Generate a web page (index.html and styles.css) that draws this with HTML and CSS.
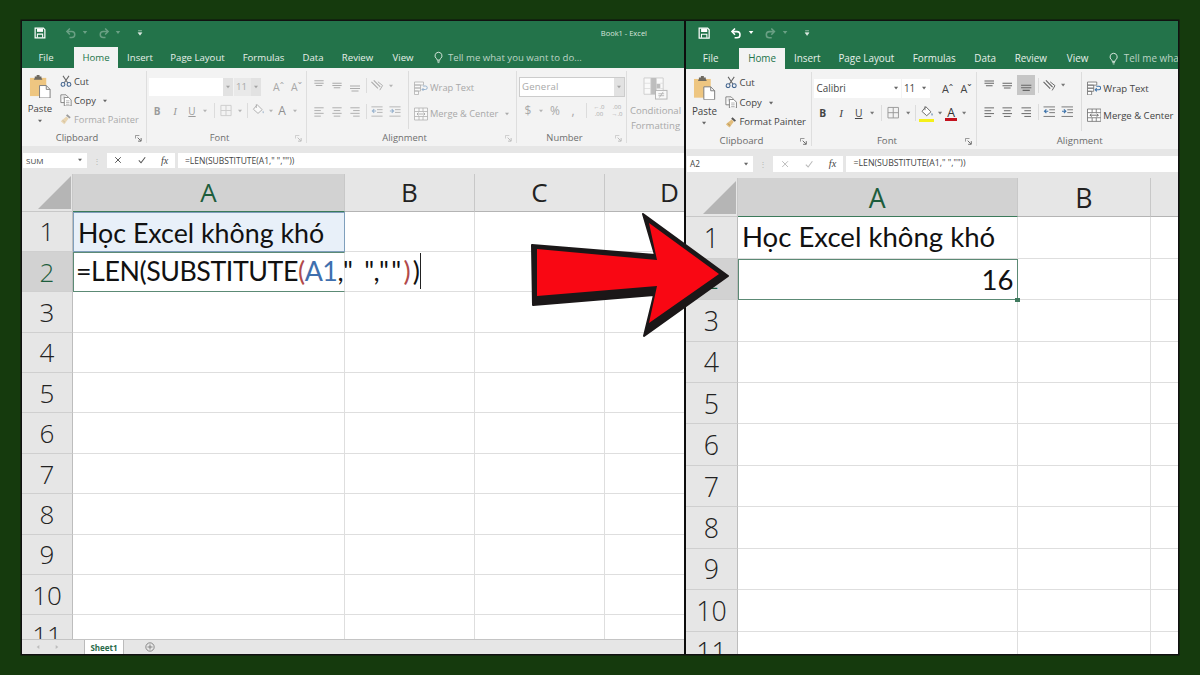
FILE: index.html
```html
<!DOCTYPE html>
<html lang="vi">
<head>
<meta charset="utf-8">
<title>Excel LEN SUBSTITUTE</title>
<link rel="stylesheet" href="styles.css">
</head>
<body>
<svg class="sprite" aria-hidden="true">
  <symbol id="save" viewBox="0 0 16 16"><path d="M1.5 1.5h11l2 2v11h-13z" fill="none" stroke="currentColor" stroke-width="1.6"/><path d="M4 2v4.5h8V2z" fill="currentColor"/><path d="M4.5 14V9.5h7V14" fill="none" stroke="currentColor" stroke-width="1.4"/></symbol>
  <symbol id="undo" viewBox="0 0 16 16"><path d="M6.5 2 2.5 6l4 4" fill="none" stroke="currentColor" stroke-width="2"/><path d="M3 6h6a4 4 0 0 1 0 8H6" fill="none" stroke="currentColor" stroke-width="2"/></symbol>
  <symbol id="redo" viewBox="0 0 16 16"><path d="M9.500 2l4 4-4 4" fill="none" stroke="currentColor" stroke-width="2"/><path d="M13 6H7a4 4 0 0 0 0 8h3" fill="none" stroke="currentColor" stroke-width="2"/></symbol>
  <symbol id="caret" viewBox="0 0 8 6"><path d="M1 1h6L4 5z" fill="currentColor"/></symbol>
  <symbol id="qat" viewBox="0 0 8 8"><path d="M1.500 1h5M1.500 3.500h5L4 7z" fill="currentColor" stroke="currentColor" stroke-width=".8"/></symbol>
  <symbol id="paste" viewBox="0 0 24 24"><rect x="1" y="3" width="17" height="19" fill="#eec681"/><path d="M6 3V1.500h2V0h3v1.500h2V3l1 2H5z" fill="#6f6a60"/><path d="M11 11h7l4 4v9H11z" fill="#fff" stroke="#7d7d7d"/><path d="M18 11v4h4" fill="none" stroke="#7d7d7d"/></symbol>
  <symbol id="cut" viewBox="0 0 14 14"><path d="M3.500 1 9 9M10.500 1 5 9" fill="none" stroke="#666" stroke-width="1.200"/><circle cx="3.500" cy="11" r="2.200" fill="none" stroke="#41648f" stroke-width="1.200"/><circle cx="10.500" cy="11" r="2.200" fill="none" stroke="#41648f" stroke-width="1.200"/></symbol>
  <symbol id="copy" viewBox="0 0 14 14"><path d="M1 1h6l2 2v7H1z" fill="#fff" stroke="#777"/><path d="M5 4h5l3 3v7H5z" fill="#fff" stroke="#777"/><path d="M3 3.500h3M3 5.500h1M7 8h4M7 10h4M7 12h4" stroke="#888" stroke-width=".7"/></symbol>
  <symbol id="brush" viewBox="0 0 14 14"><path d="M8.500 1.500 12.500 5 11 6.500 7 3z" fill="#555"/><path d="M7.500 4 10 6.500 5 13 1 9.500z" fill="#e2bd7c"/><path d="M3 8.500 6 11" stroke="#a78c58"/></symbol>
  <symbol id="launch" viewBox="0 0 8 8"><path d="M.5 4V.5H5" fill="none" stroke="#8a8a8a"/><path d="M3 3l3.500 3.500M7 3.500V7H3.500" fill="none" stroke="#5d5d5d"/></symbol>
  <symbol id="borders" viewBox="0 0 14 14"><path d="M1.500 1.500h11v11h-11zM7 1.500v11M1.500 7h11" fill="none" stroke="currentColor"/></symbol>
  <symbol id="fill" viewBox="0 0 18 18"><path d="M8 2 14 8 9 12.500 3.500 7.500z" fill="#fff" stroke="#666" stroke-width="1.100"/><path d="M7 1.500V6" stroke="#666"/><path d="M15 9c1.300 1.800 1.500 3 .4 3.300-1 .2-1.400-1.200-.4-3.300z" fill="#6a8fb5"/></symbol>
  <symbol id="altop" viewBox="0 0 14 14"><path d="M2 2h10M2 4.500h10M3.500 7h7" stroke="currentColor" stroke-width="1.100"/></symbol>
  <symbol id="almid" viewBox="0 0 14 14"><path d="M2 4.500h10M2 7h10M3.500 9.500h7" stroke="currentColor" stroke-width="1.100"/></symbol>
  <symbol id="albot" viewBox="0 0 14 14"><path d="M2 7h10M2 9.500h10M3.500 12h7" stroke="currentColor" stroke-width="1.100"/></symbol>
  <symbol id="alleft" viewBox="0 0 14 14"><path d="M2 3h10M2 6h7M2 9h10M2 12h7" stroke="currentColor"/></symbol>
  <symbol id="alcen" viewBox="0 0 14 14"><path d="M2 3h10M3.500 6h7M2 9h10M3.500 12h7" stroke="currentColor"/></symbol>
  <symbol id="alright" viewBox="0 0 14 14"><path d="M2 3h10M5 6h7M2 9h10M5 12h7" stroke="currentColor"/></symbol>
  <symbol id="orient" viewBox="0 0 16 14"><path d="M2 3 9 10M4.500 1.500 11.500 8.500" stroke="currentColor" stroke-width="1.200" fill="none"/><path d="M9 3l5 4-3 5" fill="none" stroke="currentColor"/></symbol>
  <symbol id="indl" viewBox="0 0 14 14"><path d="M1 2h12M7 5h6M7 8h6M1 12h12" stroke="#777"/><path d="M6 6.500H2M4 4.500l-2 2 2 2" fill="none" stroke="#3f74ab" stroke-width="1.200"/></symbol>
  <symbol id="indr" viewBox="0 0 14 14"><path d="M1 2h12M7 5h6M7 8h6M1 12h12" stroke="#777"/><path d="M1.500 6.500h4M3.500 4.500l2 2-2 2" fill="none" stroke="#3f74ab" stroke-width="1.200"/></symbol>
  <symbol id="wrap" viewBox="0 0 14 14"><path d="M.5 1h9v3h-9zM.5 4h6v3h-6zM.5 7h6v3h-6zM.5 10h4v3.500h-4z" fill="#fff" stroke="#707070" stroke-width=".8"/><path d="M9 5h2.500a1.500 1.500 0 0 1 0 3.500H8M9.500 7 8 8.500 9.500 10" fill="none" stroke="#3f74ab"/></symbol>
  <symbol id="merge" viewBox="0 0 14 14"><path d="M.5 1h13v12H.5zM.5 4.500h13M.5 9.500h13M5 1v3.500M9 1v3.500M5 9.500V13M9 9.500V13" fill="#fff" stroke="#707070" stroke-width=".8"/><path d="M3 7h8M4.500 5.500 3 7l1.500 1.500M9.500 5.500 11 7 9.500 8.500" fill="none" stroke="#555" stroke-width=".8"/></symbol>
  <symbol id="cf" viewBox="0 0 26 24"><path d="M1 1h20v17H1z" fill="#fff" stroke="#aaa"/><path d="M8 1h6v6h4v5h-4v6H8z" fill="#8a8a8a"/><path d="M8 6.500H1M8 12H1M21 6.500h-3M21 12h-3M14 1v17M8 1v17" stroke="#bbb" stroke-width=".7"/><rect x="13" y="14" width="12" height="9" fill="#fff" stroke="#777"/><path d="M16 17.500h6M16 19.500h6M21 15.500l-4 6" stroke="#666" stroke-width=".8"/></symbol>
  <symbol id="bulb" viewBox="0 0 12 16"><path d="M6 1a4.700 4.700 0 0 0-2.700 8.500c.6.5.7 1.200.8 2h3.800c.1-.8.2-1.500.8-2A4.700 4.700 0 0 0 6 1z" fill="none" stroke="currentColor" stroke-width="1.200"/><path d="M4.300 13h3.400M4.800 14.800h2.400" stroke="currentColor"/></symbol>
  <symbol id="x" viewBox="0 0 10 10"><path d="M1.500 1.500l7 7M8.500 1.500l-7 7" stroke="currentColor" stroke-width="1.200"/></symbol>
  <symbol id="chk" viewBox="0 0 10 10"><path d="M1 5.500 3.800 8.500 9 1.500" fill="none" stroke="currentColor" stroke-width="1.300"/></symbol>
  <symbol id="plus" viewBox="0 0 12 12"><circle cx="6" cy="6" r="5" fill="none" stroke="#777"/><path d="M3 6h6M6 3v6" stroke="#777"/></symbol>
  <symbol id="navl" viewBox="0 0 6 8"><path d="M5 1 1 4l4 3z" fill="#bdbdbd"/></symbol>
  <symbol id="navr" viewBox="0 0 6 8"><path d="M1 1l4 3-4 3z" fill="#bdbdbd"/></symbol>
</svg>

<main class="frame">
  <!-- LEFT WINDOW -->
  <section class="pane pane-left">
    <div class="title">
      <svg class="qa qa-save"><use href="#save"/></svg>
      <svg class="qa qa-undo dim"><use href="#undo"/></svg>
      <svg class="qa-c dim"><use href="#caret"/></svg>
      <svg class="qa qa-redo dim"><use href="#redo"/></svg>
      <svg class="qa-c dim"><use href="#caret"/></svg>
      <svg class="qa-q"><use href="#qat"/></svg>
      <span class="book">Book1 - Excel</span>
    </div>
    <nav class="tabs">
      <span class="tab t-file">File</span><span class="tab t-home">Home</span><span class="tab t-ins">Insert</span><span class="tab t-pl">Page Layout</span><span class="tab t-for">Formulas</span><span class="tab t-dat">Data</span><span class="tab t-rev">Review</span><span class="tab t-vie">View</span>
      <svg class="bulb"><use href="#bulb"/></svg><span class="tell">Tell me what you want to do...</span>
    </nav>
    <div class="ribbon">
      <div class="g g-clip">
        <div class="g-body clip-body">
          <div class="paste"><svg class="paste-i"><use href="#paste"/></svg><span>Paste</span><svg class="car"><use href="#caret"/></svg></div>
          <div class="clip-list">
            <div class="cl"><svg class="cl-i"><use href="#cut"/></svg><span>Cut</span></div>
            <div class="cl"><svg class="cl-i"><use href="#copy"/></svg><span>Copy</span><svg class="car car-l"><use href="#caret"/></svg></div>
            <div class="cl faded"><svg class="cl-i"><use href="#brush"/></svg><span>Format Painter</span></div>
          </div>
        </div>
        <div class="g-label"><span>Clipboard</span><svg class="launch"><use href="#launch"/></svg></div>
      </div>
      <div class="g g-font off">
        <div class="g-body col">
          <div class="r r1">
            <div class="combo c-name"><span></span><i class="drop"><svg class="car"><use href="#caret"/></svg></i></div>
            <div class="combo c-size"><span>11</span><i class="drop"><svg class="car"><use href="#caret"/></svg></i></div>
            <span class="grow">Aˆ</span><span class="shrink">Aˇ</span>
          </div>
          <div class="r r2">
            <b class="ib w18 sm">B</b><i class="ib w18 sm serif">I</i><u class="ib w16 sm">U</u><svg class="cr w10"><use href="#caret"/></svg><s class="sp w8"></s><svg class="ic w16"><use href="#borders"/></svg><svg class="cr w12"><use href="#caret"/></svg><s class="sp w2"></s><svg class="ic w20 fillic"><use href="#fill"/></svg><svg class="cr w6"><use href="#caret"/></svg><span class="ib w16 fontc">A</span><svg class="cr w10"><use href="#caret"/></svg>
          </div>
        </div>
        <div class="g-label"><span>Font</span><svg class="launch"><use href="#launch"/></svg></div>
      </div>
      <div class="g g-align off">
        <div class="g-body al-body">
          <div class="al-left">
            <div class="r r1b">
              <svg class="ic w18 al"><use href="#altop"/></svg><svg class="ic w18 al"><use href="#almid"/></svg><span class="ib w18"><svg class="ic14 al"><use href="#albot"/></svg></span><s class="sp w4"></s><svg class="ic w18 al"><use href="#orient"/></svg><svg class="cr w10"><use href="#caret"/></svg>
            </div>
            <div class="r r2b">
              <svg class="ic w18 al"><use href="#alleft"/></svg><svg class="ic w18 al"><use href="#alcen"/></svg><svg class="ic w18 al"><use href="#alright"/></svg><s class="sp w4"></s><svg class="ic w18"><use href="#indl"/></svg><svg class="ic w18"><use href="#indr"/></svg>
            </div>
          </div>
          <div class="al-right">
            <div class="cl cl-w"><svg class="cl-i"><use href="#wrap"/></svg><span>Wrap Text</span></div>
            <div class="cl cl-w"><svg class="cl-i"><use href="#merge"/></svg><span>Merge &amp; Center</span><svg class="car car-l"><use href="#caret"/></svg></div>
          </div>
        </div>
        <div class="g-label"><span>Alignment</span><svg class="launch"><use href="#launch"/></svg></div>
      </div>
      <div class="g g-num off">
        <div class="g-body col">
          <div class="r r1"><div class="combo c-gen"><span>General</span><i class="drop"><svg class="car"><use href="#caret"/></svg></i></div></div>
          <div class="r r2 r2n">
            <span class="ib w16 big">$</span><svg class="cr w10"><use href="#caret"/></svg><span class="ib w18 big">%</span><span class="ib w18 big">,</span><s class="sp w8"></s><span class="dec"><em>←.0</em><em>.00</em></span><span class="dec"><em>.00</em><em>→.0</em></span>
          </div>
        </div>
        <div class="g-label"><span>Number</span><svg class="launch"><use href="#launch"/></svg></div>
      </div>
      <div class="g g-cf off">
        <svg class="cf-i"><use href="#cf"/></svg>
        <span class="cf-t">Conditional</span>
        <span class="cf-t">Formatting</span>
      </div>
    </div>
    <div class="fbar">
      <div class="namebox"><span>SUM</span><svg class="car"><use href="#caret"/></svg></div>
      <span class="vdots">⋮</span>
      <div class="fx"><svg class="fxi"><use href="#x"/></svg><svg class="fxi"><use href="#chk"/></svg><i>fx</i></div>
      <div class="finput">=LEN(SUBSTITUTE(A1," ",""))</div>
    </div>
    <div class="sheet">
      <div class="row head"><div class="corner"><b></b></div><div class="ch a on">A</div><div class="ch b">B</div><div class="ch b">C</div><div class="ch b">D</div></div>
      <div class="row"><div class="rh">1</div><div class="c a sel1">Học Excel không khó</div><div class="c b"></div><div class="c b"></div><div class="c b"></div></div>
      <div class="row"><div class="rh on">2</div><div class="c a edit"><span class="etext">=LEN(SUBSTITUTE<span class="red">(</span><span class="blue">A1</span><span class="q">," ",""</span><span class="red q">)</span>)</span></div><div class="c b"></div><div class="c b"></div><div class="c b"></div></div>
      <div class="row"><div class="rh">3</div><div class="c a"></div><div class="c b"></div><div class="c b"></div><div class="c b"></div></div>
      <div class="row"><div class="rh">4</div><div class="c a"></div><div class="c b"></div><div class="c b"></div><div class="c b"></div></div>
      <div class="row"><div class="rh">5</div><div class="c a"></div><div class="c b"></div><div class="c b"></div><div class="c b"></div></div>
      <div class="row"><div class="rh">6</div><div class="c a"></div><div class="c b"></div><div class="c b"></div><div class="c b"></div></div>
      <div class="row"><div class="rh">7</div><div class="c a"></div><div class="c b"></div><div class="c b"></div><div class="c b"></div></div>
      <div class="row"><div class="rh">8</div><div class="c a"></div><div class="c b"></div><div class="c b"></div><div class="c b"></div></div>
      <div class="row"><div class="rh">9</div><div class="c a"></div><div class="c b"></div><div class="c b"></div><div class="c b"></div></div>
      <div class="row"><div class="rh">10</div><div class="c a"></div><div class="c b"></div><div class="c b"></div><div class="c b"></div></div>
      <div class="row"><div class="rh">11</div><div class="c a"></div><div class="c b"></div><div class="c b"></div><div class="c b"></div></div>
    </div>
    <div class="sheetbar">
      <svg class="nav"><use href="#navl"/></svg><svg class="nav"><use href="#navr"/></svg>
      <span class="stab">Sheet1</span>
      <svg class="addsheet"><use href="#plus"/></svg>
    </div>
  </section>

  <!-- RIGHT WINDOW -->
  <section class="pane pane-right">
    <div class="title">
      <svg class="qa qa-save"><use href="#save"/></svg>
      <svg class="qa qa-undo"><use href="#undo"/></svg>
      <svg class="qa-c"><use href="#caret"/></svg>
      <svg class="qa qa-redo dim"><use href="#redo"/></svg>
      <svg class="qa-c dim"><use href="#caret"/></svg>
      <svg class="qa-q"><use href="#qat"/></svg>
    </div>
    <nav class="tabs">
      <span class="tab t-file">File</span><span class="tab t-home">Home</span><span class="tab t-ins">Insert</span><span class="tab t-pl">Page Layout</span><span class="tab t-for">Formulas</span><span class="tab t-dat">Data</span><span class="tab t-rev">Review</span><span class="tab t-vie">View</span>
      <svg class="bulb"><use href="#bulb"/></svg><span class="tell">Tell me what you want to do...</span>
    </nav>
    <div class="ribbon">
      <div class="g g-clip">
        <div class="g-body clip-body">
          <div class="paste"><svg class="paste-i"><use href="#paste"/></svg><span>Paste</span><svg class="car"><use href="#caret"/></svg></div>
          <div class="clip-list">
            <div class="cl"><svg class="cl-i"><use href="#cut"/></svg><span>Cut</span></div>
            <div class="cl"><svg class="cl-i"><use href="#copy"/></svg><span>Copy</span><svg class="car car-l"><use href="#caret"/></svg></div>
            <div class="cl"><svg class="cl-i"><use href="#brush"/></svg><span>Format Painter</span></div>
          </div>
        </div>
        <div class="g-label"><span>Clipboard</span><svg class="launch"><use href="#launch"/></svg></div>
      </div>
      <div class="g g-font">
        <div class="g-body col">
          <div class="r r1">
            <div class="combo c-name"><span>Calibri</span><i class="drop"><svg class="car"><use href="#caret"/></svg></i></div>
            <div class="combo c-size"><span>11</span><i class="drop"><svg class="car"><use href="#caret"/></svg></i></div>
            <span class="grow">Aˆ</span><span class="shrink">Aˇ</span>
          </div>
          <div class="r r2">
            <b class="ib w18 sm">B</b><i class="ib w18 sm serif">I</i><u class="ib w16 sm">U</u><svg class="cr w10"><use href="#caret"/></svg><s class="sp w8"></s><svg class="ic w16 bord"><use href="#borders"/></svg><svg class="cr w12"><use href="#caret"/></svg><s class="sp w2"></s><span class="ib w20 fillwrap"><svg class="fill14"><use href="#fill"/></svg></span><svg class="cr w6"><use href="#caret"/></svg><span class="ib w16 fontc red-u">A</span><svg class="cr w10"><use href="#caret"/></svg>
          </div>
        </div>
        <div class="g-label"><span>Font</span><svg class="launch"><use href="#launch"/></svg></div>
      </div>
      <div class="g g-align">
        <div class="g-body al-body">
          <div class="al-left">
            <div class="r r1b">
              <svg class="ic w18 al"><use href="#altop"/></svg><svg class="ic w18 al"><use href="#almid"/></svg><span class="ib w18 pressed"><svg class="ic14 al"><use href="#albot"/></svg></span><s class="sp w4"></s><svg class="ic w18 al"><use href="#orient"/></svg><svg class="cr w10"><use href="#caret"/></svg>
            </div>
            <div class="r r2b">
              <svg class="ic w18 al"><use href="#alleft"/></svg><svg class="ic w18 al"><use href="#alcen"/></svg><svg class="ic w18 al"><use href="#alright"/></svg><s class="sp w4"></s><svg class="ic w18"><use href="#indl"/></svg><svg class="ic w18"><use href="#indr"/></svg>
            </div>
          </div>
          <div class="al-right">
            <div class="cl cl-w"><svg class="cl-i"><use href="#wrap"/></svg><span>Wrap Text</span></div>
            <div class="cl cl-w"><svg class="cl-i"><use href="#merge"/></svg><span>Merge &amp; Center</span></div>
          </div>
        </div>
        <div class="g-label"><span>Alignment</span></div>
      </div>
    </div>
    <div class="fbar">
      <div class="namebox"><span>A2</span><svg class="car"><use href="#caret"/></svg></div>
      <span class="vdots">⋮</span>
      <div class="fx"><svg class="fxi pale"><use href="#x"/></svg><svg class="fxi pale"><use href="#chk"/></svg><i>fx</i></div>
      <div class="finput">=LEN(SUBSTITUTE(A1," ",""))</div>
    </div>
    <div class="sheet">
      <div class="row head"><div class="corner"><b></b></div><div class="ch a on">A</div><div class="ch b">B</div><div class="ch b"></div></div>
      <div class="row"><div class="rh">1</div><div class="c a">Học Excel không khó</div><div class="c b"></div><div class="c b"></div></div>
      <div class="row"><div class="rh on">2</div><div class="c a active">16</div><div class="c b"></div><div class="c b"></div></div>
      <div class="row"><div class="rh">3</div><div class="c a"></div><div class="c b"></div><div class="c b"></div></div>
      <div class="row"><div class="rh">4</div><div class="c a"></div><div class="c b"></div><div class="c b"></div></div>
      <div class="row"><div class="rh">5</div><div class="c a"></div><div class="c b"></div><div class="c b"></div></div>
      <div class="row"><div class="rh">6</div><div class="c a"></div><div class="c b"></div><div class="c b"></div></div>
      <div class="row"><div class="rh">7</div><div class="c a"></div><div class="c b"></div><div class="c b"></div></div>
      <div class="row"><div class="rh">8</div><div class="c a"></div><div class="c b"></div><div class="c b"></div></div>
      <div class="row"><div class="rh">9</div><div class="c a"></div><div class="c b"></div><div class="c b"></div></div>
      <div class="row"><div class="rh">10</div><div class="c a"></div><div class="c b"></div><div class="c b"></div></div>
      <div class="row"><div class="rh">11</div><div class="c a"></div><div class="c b"></div><div class="c b"></div></div>
    </div>
  </section>
</main>

<svg class="arrow" viewBox="0 0 210 135" aria-hidden="true">
  <polygon points="2,34 125,44 113,3 198,65 114,125 124,84 3,94" fill="#1b1718" stroke="#1b1718" stroke-width="2" stroke-linejoin="round"/>
  <polygon points="7,38 127,49 119,12 189,63 119,112 127,75 7,85" fill="#f90713"/>
</svg>
</body>
</html>
```
FILE: styles.css
```css
* { box-sizing: border-box; }
html, body { margin: 0; height: 100%; }
body {
  background: #153a0d;
  padding: 20px 0 0 21px;
  font-family: "Open Sans", "Noto Sans", sans-serif;
  overflow: hidden;
  position: relative;
}
.sprite { position: absolute; width: 0; height: 0; }
svg { display: block; flex: none; }

.frame {
  width: 1158px;
  height: 635px;
  border: 1px solid #111;
  box-shadow: 0 0 0 .5px #111;
  display: flex;
  background: #fff;
}
.pane {
  display: flex;
  flex-direction: column;
  overflow: hidden;
  min-width: 0;
  color: #444;
}
.pane-left { width: 662px; flex: none; }
.pane-right {
  flex: 1;
  border-left: 2px solid #0d0d0d;
  zoom: 1.028;
}

/* title + tabs */
.title {
  height: 26px;
  flex: none;
  background: #23734a;
  color: #fff;
  display: flex;
  align-items: center;
  padding: 0 0 3px 12px;
}
.qa { width: 12px; height: 12px; color: #fff; }
.qa-undo { margin-left: 19px; }
.qa-redo { margin-left: 10px; }
.qa-c { width: 6px; height: 5px; margin-left: 5px; color: #fff; }
.dim { opacity: .32; }
.qa-q { width: 6px; height: 6px; margin-left: 16px; color: #dce9e1; }
.book {
  font-size: 7.5px;
  color: #d8e5dd;
  margin-left: auto;
  margin-right: 37px;
}
.tabs {
  height: 20.5px;
  flex: none;
  background: #23734a;
  display: flex;
  align-items: center;
  font-size: 9.6px;
  color: #e6efe9;
  white-space: nowrap;
}
.tab { height: 100%; flex: none; display: flex; align-items: center; justify-content: center; }
.t-file { width: 52px; padding-right: 4px; }
.t-home { width: 44px; background: #f3f3f3; color: #22734a; }
.t-ins { width: 44px; }
.t-pl { width: 71px; }
.t-for { width: 61px; }
.t-dat { width: 38px; }
.t-rev { width: 51px; }
.t-vie { width: 40px; margin-right: 11px; }
.bulb { width: 9px; height: 13px; color: #e6efe9; }
.tell { margin-left: 5px; color: #bcd3c5; }

/* ribbon */
.ribbon {
  height: 78px;
  flex: none;
  background: #f3f3f3;
  display: flex;
  white-space: nowrap;
  font-size: 9.6px;
  overflow: hidden;
}
.g {
  display: flex;
  flex-direction: column;
  flex: none;
  position: relative;
  padding-top: 3px;
}
.g::after {
  content: "";
  position: absolute;
  right: 0; top: 3px; bottom: 3px;
  width: 1px;
  background: #dedede;
}
.g-body { height: 60px; flex: none; }
.g-label {
  flex: none;
  display: flex;
  align-items: center;
  height: 14px;
  color: #6a6a6a;
  font-size: 9.4px;
}
.g-label span { flex: 1; text-align: center; }
.launch { width: 7px; height: 7px; margin: 2px 5px 0 3px; }
.g-clip { width: 125px; }
.g-font { width: 160px; }
.g-align { width: 210px; }
.g-num { width: 110px; }
.g-cf { width: 57px; align-items: center; padding-top: 9px; overflow: hidden; }
.g-cf::after { display: none; }

.clip-body { display: flex; }
.paste {
  width: 35px;
  display: flex;
  flex-direction: column;
  align-items: center;
  padding-left: 1px;
  padding-top: 4px;
  color: #444;
}
.paste-i { width: 23px; height: 23px; margin-bottom: 5px; }
.paste span { line-height: 12px; }
.car { width: 6px; height: 4px; color: #666; margin-top: 4px; }
.car-l { margin: 1px 0 0 6px; }
.clip-list { padding: 1px 0 0 3px; display: flex; flex-direction: column; }
.cl { height: 19px; display: flex; align-items: center; font-size: 9.3px; }
.cl-i { width: 12px; height: 12px; margin-right: 2px; }
.faded { color: #a9a9a9; }
.faded .cl-i { opacity: .55; }
.cl-w { height: 26px; }
.cl-w .cl-i { width: 14px; height: 14px; margin-right: 2px; }

.col { display: flex; flex-direction: column; padding-left: 2px; }
.r { display: flex; align-items: center; }
.r1 { height: 18px; margin-top: 7px; }
.r2 { height: 18px; margin-top: 6px; margin-left: -2px; padding-left: 1px; }
.combo { display: flex; height: 18px; background: #fff; align-items: center; font-size: 9.6px; }
.combo span { flex: 1; padding-left: 2px; }
.drop { width: 10px; height: 100%; display: flex; align-items: center; justify-content: center; }
.drop .car { margin: 0; }
.c-name { width: 84px; }
.c-size { width: 27px; margin-left: 1px; }
.grow { margin-left: 12px; width: 18px; font-size: 10.5px; }
.shrink { width: 16px; font-size: 10.5px; }
.ib { display: flex; align-items: center; justify-content: center; height: 18px; flex: none; }
.sm { font-size: 10px; }
.serif { font-family: "Liberation Serif", serif; font-size: 11px; }
.big { font-size: 12px; }
.w2 { width: 2px; } .w4 { width: 4px; } .w6 { width: 6px; } .w8 { width: 8px; } .w10 { width: 10px; }
.w12 { width: 12px; } .w16 { width: 16px; } .w18 { width: 18px; } .w20 { width: 20px; }
.cr { height: 4px; color: #777; }
.ic { height: 13px; }
.ic14 { width: 14px; height: 14px; }
.fillic { height: 15px; }
.fill14 { width: 15px; height: 15px; }
.sp { height: 15px; position: relative; display: block; flex: none; }
.sp::after { content: ""; position: absolute; left: 50%; top: 0; bottom: 0; width: 1px; background: #dcdcdc; }
.fontc { font-size: 12px; }

.red-u { position: relative; color: #333; }
.red-u::after { content: ""; position: absolute; left: 2px; right: 2px; bottom: 1px; height: 3px; background: #c3121e; }
.fillwrap { position: relative; }
.fillwrap::after { content: ""; position: absolute; left: 3px; right: 3px; bottom: 0; height: 3px; background: #f5f019; }
.bord { color: #999; }

.al-body { display: flex; }
.al-left { width: 102px; border-right: 1px solid #dcdcdc; height: 58px; padding: 5px 0 0 3px; }
.r1b { height: 20px; color: #777; }
.r2b { height: 20px; margin-top: 6px; }
.al { color: #666; }
.pressed { background: #c6c6c6; height: 19px; width: 18px; }
.al-right { padding: 4px 0 0 5px; }

.c-gen { width: 104px; margin-left: 1px; box-shadow: 0 0 0 1px #ccc; }
.c-gen .drop { background: #dedede; }
.c-gen span { letter-spacing: .2px; }
.r2n { padding-left: 3px; }
.dec { display: flex; flex-direction: column; width: 18px; align-items: center; font-size: 6px; line-height: 6.5px; }
.dec em { font-style: normal; }

.cf-i { width: 25px; height: 23px; margin-bottom: 3px; }
.cf-t { line-height: 15px; font-size: 9.6px; }

/* disabled left ribbon */
.off { color: #a8a8a8; }
.off .g-label { color: #6f6f6f; }
.off .g-label .launch { opacity: .4; }
.off .ic, .off .cl-i, .off .cr, .off .car, .off .cf-i, .off .ic14, .off .fillic { opacity: .5; }
.off .combo .drop { background: #e2e2e2; }
.off .c-size { background: #e9e9e9; }
.off .r2 b, .off .r2 i, .off .r2 u { color: #9b9b9b; }
.off .fontc { color: #8f8f8f; }

/* formula bar */
.fbar {
  height: 28px;
  flex: none;
  background: #e6e6e6;
  display: flex;
  align-items: flex-start;
  padding: 7px 0 0 1px;
  font-size: 8px;
}
.namebox {
  width: 64px; height: 15px; background: #fff;
  display: flex; align-items: center; justify-content: space-between;
  padding: 0 4px 0 3px;
}
.namebox .car { margin: 0; }
.vdots { width: 20px; text-align: center; color: #b5b5b5; line-height: 15px; }
.fx {
  width: 68px; height: 15px; background: #fff;
  display: flex; align-items: center; gap: 16px; padding-left: 7px;
  font-family: "Liberation Serif", serif; font-size: 10px;
}
.fx i { margin-left: -1px; }
.fxi { width: 8px; height: 8px; color: #555; }
.fxi.pale { color: #bbb; }
.finput {
  flex: 1; height: 15px; margin-left: 3px; background: #fff;
  padding-left: 7px; line-height: 15px; color: #444; font-size: 8.5px;
  font-family: "Open Sans", sans-serif; white-space: nowrap;
}

/* sheet */
.sheet { flex: 1; min-height: 0; overflow: hidden; background: #fff; }
.row { display: flex; height: 40.4px; }
.head { height: 38px; background: #e6e6e6; }
.corner { width: 51px; flex: none; border-right: 1px solid #c8c8c8; border-bottom: 1px solid #c8c8c8; display: flex; justify-content: flex-end; align-items: flex-end; padding: 0 1px 2px 0; }
.corner b { display: block; width: 0; height: 0; border-style: solid; border-width: 0 0 33px 33px; border-color: transparent transparent #b5b5b5 transparent; }
.ch {
  flex: none; display: flex; align-items: center; justify-content: center;
  font-size: 26px; font-weight: 400; color: #222;
  border-right: 1px solid #c8c8c8; border-bottom: 1px solid #b4b4b4;
}
.ch.on { background: #d2d2d2; color: #1d5d3c; border-bottom: 1px solid #3b7a5a; }
.a { width: 272px; flex: none; }
.b { width: 130px; flex: none; }
.rh {
  width: 51px; flex: none; background: #e6e6e6; color: #222;
  font-size: 26px; display: flex; align-items: center; justify-content: center;
  border-right: 1px solid #bdbdbd; border-bottom: 1px solid #cfcfcf;
  font-weight: 300;
}
.rh.on { background: #d2d2d2; color: #1d5d3c; }
.c {
  border-right: 1px solid #dedede; border-bottom: 1px solid #dedede;
  font-family: Lato, "Noto Sans", sans-serif;
  font-size: 26.8px; color: #111; line-height: 40px;
  padding-left: 5px; white-space: nowrap;
}
.sel1 { background: #e8f0f9; border: 1px solid #7f9fbc; padding-left: 4px; line-height: 40px; }
.edit {
  border-top: 1.5px solid #5c8a75;
  border-left: 1.5px solid #5c8a75;
  border-bottom: 1.5px solid #5c8a75;
  padding-left: 2px;
}
.etext {
  display: inline-block; border-right: 1px solid #222; line-height: 36px;
  vertical-align: top; padding-right: 1px; letter-spacing: -.45px;
}
.q { letter-spacing: 2.2px; }
.active { border: 1.5px solid #5c8a75; text-align: right; padding: 0 3px 0 0; position: relative; }
.active::after {
  content: ""; position: absolute; right: -3px; bottom: -3px;
  width: 4px; height: 4px; background: #3f7a5e;
}
.red { color: #b24a4a; }
.blue { color: #3f6fae; }

/* sheet tabs */
.sheetbar {
  height: 15px; flex: none; background: #e6e6e6; border-top: 1px solid #c4c4c4;
  display: flex; align-items: center; padding-left: 14px;
}
.nav { width: 4px; height: 6px; margin-right: 15px; }
.nav + .nav { margin-right: 25px; }
.stab {
  width: 40px; height: 14px; background: #fff; color: #2a6b4a; font-weight: 700;
  font-size: 8px; display: flex; align-items: center; justify-content: center;
  border-right: 1px solid #bbb; border-left: 1px solid #bbb;
}
.addsheet { width: 10px; height: 10px; margin-left: 21px; }

/* right window tweaks */
.pane-right .g-clip { width: 123px; }
.pane-right .fbar { height: 28.500px; }
.pane-right .row { height: 40.3px; }
.pane-right .head { height: 38px; }
.pane-right .corner, .pane-right .rh { width: 50.5px; }
.pane-right .al-right { padding-top: 3px; }
.pane-right .al-left { padding-top: 3px; }
.pane-right .c { line-height: 38px; padding-left: 4px; }
.pane-right .g-align { overflow: hidden; width: 200px; }
.pane-right .g-align::after { display: none; }

/* arrow overlay */
.arrow {
  position: absolute;
  left: 530px;
  top: 211px;
  width: 210px;
  height: 135px;
}
```
